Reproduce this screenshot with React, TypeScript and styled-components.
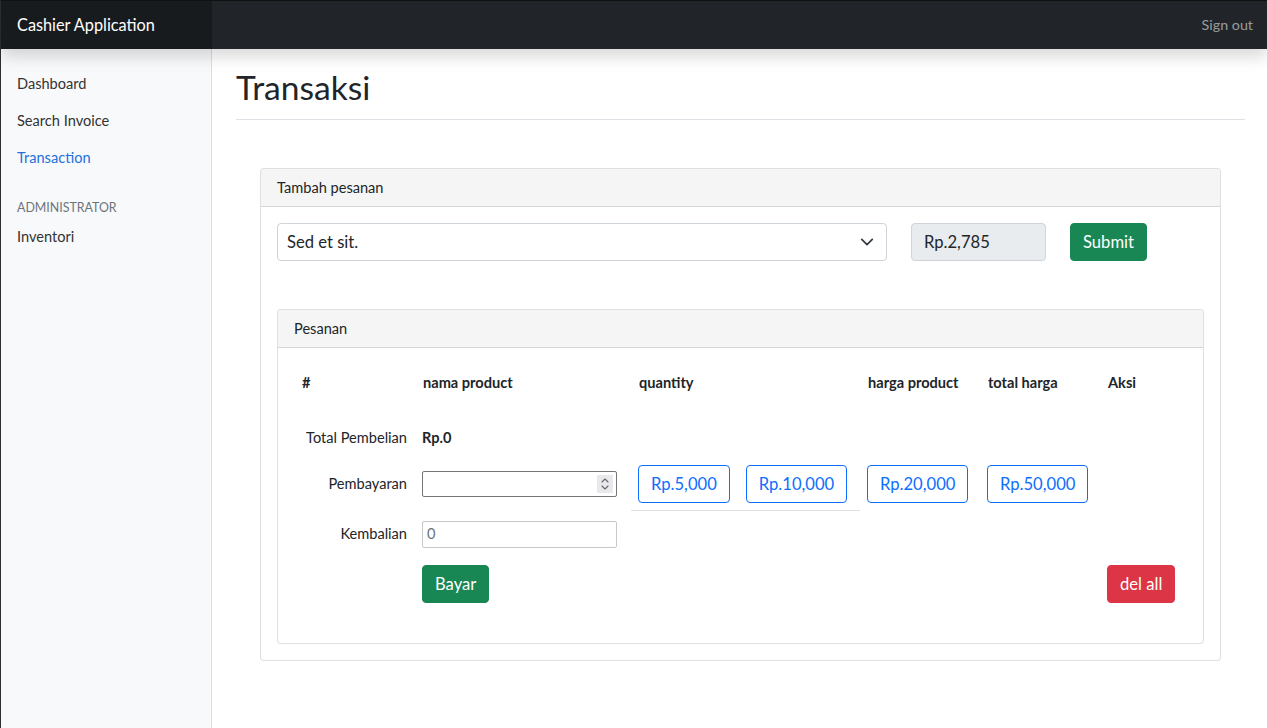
import React from "react";
import styled, { createGlobalStyle } from "styled-components";

const FONT = `"Lato", "Noto Sans", "Liberation Sans", sans-serif`;

const Global = createGlobalStyle`
  * { box-sizing: border-box; }
  html, body { margin: 0; padding: 0; background: #fff; }
  body {
    font-family: ${FONT};
    font-size: 16.6px;
    line-height: 1.5;
    color: #212529;
  }
`;

const Frame = styled.div`
  min-height: 728px;
  display: flex;
  flex-direction: column;
  border-left: 1px solid #2b2f33;
  border-top: 1px solid #111;
`;

const NavBar = styled.header`
  height: 48px;
  display: flex;
  align-items: stretch;
  background: #212529;
  box-shadow: 0 8px 16px rgba(0, 0, 0, 0.15);
  position: relative;
  z-index: 2;
`;

const Brand = styled.div`
  width: 211px;
  display: flex;
  align-items: center;
  padding-left: 16px;
  background: rgba(0, 0, 0, 0.25);
  color: #fff;
  font-size: 16.3px;
`;

const NavSpacer = styled.div`
  flex: 1;
`;

const SignOut = styled.a`
  display: flex;
  align-items: center;
  padding: 0 14px;
  color: rgba(255, 255, 255, 0.55);
  font-size: 14.3px;
  text-decoration: none;
`;

const Body = styled.div`
  flex: 1;
  display: flex;
`;

const Sidebar = styled.nav`
  width: 211px;
  background: #f8f9fa;
  border-right: 1px solid #dcdde0;
  padding-top: 20px;
  display: flex;
  flex-direction: column;
`;

const NavLink = styled.a<{ $active?: boolean }>`
  display: block;
  padding: 4px 16px 8px;
  height: 37px;
  font-size: 14.6px;
  color: ${(p) => (p.$active ? "#2470dc" : "#333")};
  text-decoration: none;
`;

const SideHeading = styled.div`
  margin-top: 15px;
  padding: 4px 16px;
  font-size: 12.4px;
  text-transform: uppercase;
  color: #6c757d;
`;

const Main = styled.main`
  flex: 1;
  padding: 0 22px 0 24px;
`;

const TitleBar = styled.div`
  padding-top: 19px;
  padding-bottom: 13px;
  border-bottom: 1px solid #dee2e6;
`;

const Title = styled.h2`
  margin: 0;
  font-size: 33.6px;
  font-weight: 400;
  line-height: 38px;
`;

const Card = styled.section<{ $inner?: boolean }>`
  border: 1px solid rgba(0, 0, 0, 0.125);
  border-radius: 4px;
  background: #fff;
  margin: ${(p) => (p.$inner ? "48px 0 0" : "48px 24px 0")};
`;

const CardHeader = styled.div`
  padding: 8px 16px;
  font-size: 14.6px;
  line-height: 21px;
  background: #f5f5f5;
  border-bottom: 1px solid rgba(0, 0, 0, 0.125);
  border-radius: 4px 4px 0 0;
`;

const CardBody = styled.div<{ $pb?: number }>`
  padding: 16px 16px ${(p) => p.$pb ?? 16}px;
`;

const FormRow = styled.div`
  display: flex;
  align-items: center;
`;

const SelectBox = styled.div`
  width: 610px;
  height: 38px;
  border: 1px solid #ced4da;
  border-radius: 4px;
  display: flex;
  align-items: center;
  justify-content: space-between;
  padding: 0 12px 0 9px;
`;

const PriceBox = styled.div`
  margin-left: 24px;
  width: 135px;
  height: 38px;
  border: 1px solid #ced4da;
  border-radius: 4px;
  background: #e9ecef;
  display: flex;
  align-items: center;
  padding: 0 12px;
`;

const Btn = styled.button<{ $variant: "success" | "danger" | "outline" }>`
  height: 38px;
  padding: 0 12px;
  border-radius: 4px;
  font-family: ${FONT};
  font-size: 16.6px;
  cursor: pointer;
  border: 1px solid
    ${(p) =>
      p.$variant === "success" ? "#198754" : p.$variant === "danger" ? "#dc3545" : "#0d6efd"};
  background: ${(p) =>
    p.$variant === "success" ? "#198754" : p.$variant === "danger" ? "#dc3545" : "#fff"};
  color: ${(p) => (p.$variant === "outline" ? "#0d6efd" : "#fff")};
`;

const SubmitBtn = styled(Btn)`
  margin-left: 24px;
`;

const Table = styled.div`
  display: grid;
  grid-template-columns: 121px 216px 229px 120px 120px 87px;
  font-size: 14.6px;
  margin-bottom: 16px;
`;

const Cell = styled.div<{ $h: number; $align?: "right"; $border?: boolean; $span?: number }>`
  height: ${(p) => p.$h}px;
  display: flex;
  align-items: center;
  gap: 16px;
  padding: 0 8px 0 7px;
  justify-content: ${(p) => (p.$align === "right" ? "flex-end" : "flex-start")};
  border-bottom: ${(p) => (p.$border ? "1px solid #dee2e6" : "none")};
  ${(p) => (p.$span ? `grid-column: span ${p.$span};` : "")}
`;

const Th = styled(Cell)`
  font-weight: 700;
  padding-left: 8px;
`;

const Strong = styled.span`
  font-weight: 700;
`;

const Spacer = styled.div`
  grid-column: 1 / -1;
  height: 18px;
`;

const NumberInput = styled.div`
  width: 195px;
  height: 26px;
  border: 1px solid #767676;
  border-radius: 2px;
  display: flex;
  align-items: center;
  justify-content: flex-end;
  padding-right: 3px;
`;

const Spin = styled.div`
  width: 16px;
  height: 18px;
  background: #e9e9ed;
  display: flex;
  align-items: center;
  justify-content: center;
`;

const TextInput = styled.div`
  width: 195px;
  height: 27px;
  border: 1px solid #c8c8c8;
  border-radius: 2px;
  display: flex;
  align-items: center;
  padding-left: 4px;
  color: #6c757d;
  font-size: 14.6px;
`;

const Chevron = () => (
  <svg width="14" height="14" viewBox="0 0 16 16" fill="none">
    <path d="M2 5l6 6 6-6" stroke="#343a40" strokeWidth="2" strokeLinecap="round" strokeLinejoin="round" />
  </svg>
);

const SpinIcon = () => (
  <svg width="10" height="14" viewBox="0 0 10 14" fill="none">
    <path d="M2 5l3-3 3 3M2 9l3 3 3-3" stroke="#666" strokeWidth="1.1" strokeLinecap="round" strokeLinejoin="round" />
  </svg>
);

export default function App() {
  return (
    <>
      <Global />
      <Frame>
        <NavBar>
          <Brand>Cashier Application</Brand>
          <NavSpacer />
          <SignOut href="#">Sign out</SignOut>
        </NavBar>
        <Body>
          <Sidebar>
            <NavLink href="#">Dashboard</NavLink>
            <NavLink href="#">Search Invoice</NavLink>
            <NavLink href="#" $active>
              Transaction
            </NavLink>
            <SideHeading>Administrator</SideHeading>
            <NavLink href="#">Inventori</NavLink>
          </Sidebar>
          <Main>
            <TitleBar>
              <Title>Transaksi</Title>
            </TitleBar>
            <Card>
              <CardHeader>Tambah pesanan</CardHeader>
              <CardBody>
                <FormRow>
                  <SelectBox>
                    <span>Sed et sit.</span>
                    <Chevron />
                  </SelectBox>
                  <PriceBox>Rp.2,785</PriceBox>
                  <SubmitBtn $variant="success">Submit</SubmitBtn>
                </FormRow>
                <Card $inner>
                  <CardHeader>Pesanan</CardHeader>
                  <CardBody $pb={17}>
                    <Table>
                      <Th $h={37}>#</Th>
                      <Th $h={37}>nama product</Th>
                      <Th $h={37}>quantity</Th>
                      <Th $h={37}>harga product</Th>
                      <Th $h={37}>total harga</Th>
                      <Th $h={37}>Aksi</Th>
                      <Spacer />

                      <Cell $h={38} $align="right">Total Pembelian</Cell>
                      <Cell $h={38} $span={5}>
                        <Strong>Rp.0</Strong>
                      </Cell>

                      <Cell $h={54} $align="right">Pembayaran</Cell>
                      <Cell $h={54}>
                        <NumberInput>
                          <Spin>
                            <SpinIcon />
                          </Spin>
                        </NumberInput>
                      </Cell>
                      <Cell $h={54} $border>
                        <Btn $variant="outline">Rp.5,000</Btn>
                        <Btn $variant="outline">Rp.10,000</Btn>
                      </Cell>
                      <Cell $h={54}>
                        <Btn $variant="outline">Rp.20,000</Btn>
                      </Cell>
                      <Cell $h={54}>
                        <Btn $variant="outline">Rp.50,000</Btn>
                      </Cell>
                      <Cell $h={54} />

                      <Cell $h={46} $align="right">Kembalian</Cell>
                      <Cell $h={46} $span={5}>
                        <TextInput>0</TextInput>
                      </Cell>

                      <Cell $h={53} />
                      <Cell $h={53} $span={4}>
                        <Btn $variant="success">Bayar</Btn>
                      </Cell>
                      <Cell $h={53}>
                        <Btn $variant="danger">del all</Btn>
                      </Cell>
                    </Table>
                  </CardBody>
                </Card>
              </CardBody>
            </Card>
          </Main>
        </Body>
      </Frame>
    </>
  );
}
